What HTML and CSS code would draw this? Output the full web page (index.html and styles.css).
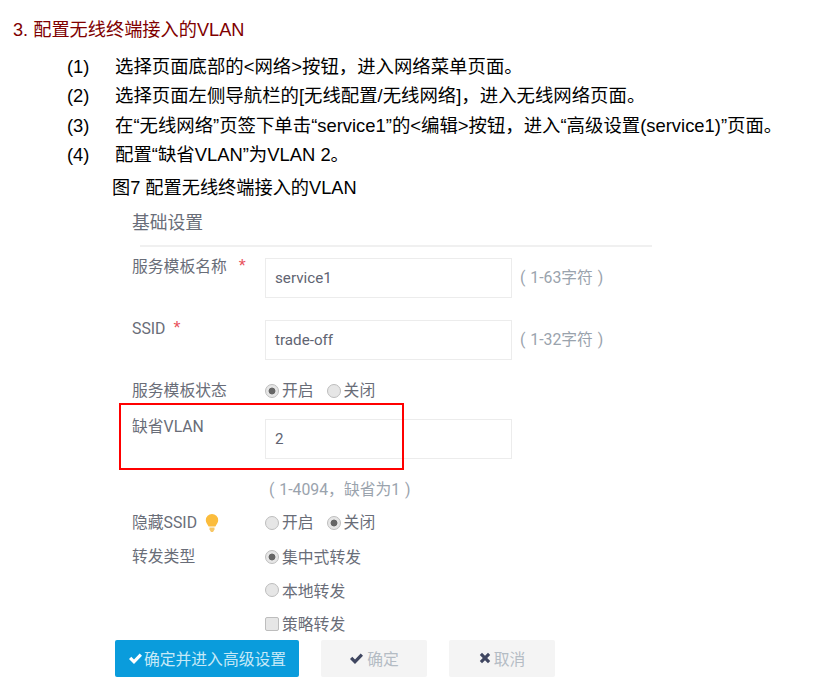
FILE: index.html
```html
<!DOCTYPE html>
<html lang="zh-CN">
<head>
<meta charset="utf-8">
<title>配置无线终端接入的VLAN</title>
<link rel="stylesheet" href="styles.css">
</head>
<body>
<h3 class="heading">3. 配置无线终端接入的VLAN</h3>
<ol class="steps">
  <li class="step"><span class="step-num">(1)</span><span>选择页面底部的&lt;网络&gt;按钮，进入网络菜单页面。</span></li>
  <li class="step"><span class="step-num">(2)</span><span>选择页面左侧导航栏的[无线配置/无线网络]，进入无线网络页面。</span></li>
  <li class="step"><span class="step-num">(3)</span><span>在“无线网络”页签下单击“service1”的&lt;编辑&gt;按钮，进入“高级设置(service1)”页面。</span></li>
  <li class="step"><span class="step-num">(4)</span><span>配置“缺省VLAN”为VLAN 2。</span></li>
</ol>
<p class="caption">图7 配置无线终端接入的VLAN</p>

<section class="shot">
  <h4 class="shot-title">基础设置</h4>
  <div class="divider"></div>

  <div class="row row-input row-name">
    <div class="label">服务模板名称<span class="star star-name">*</span></div>
    <div class="input">service1</div>
    <div class="hint">( 1-63字符 )</div>
  </div>
  <div class="row row-input row-ssid">
    <div class="label">SSID<span class="star star-ssid">*</span></div>
    <div class="input">trade-off</div>
    <div class="hint">( 1-32字符 )</div>
  </div>
  <div class="row row-status">
    <div class="label">服务模板状态</div>
    <div class="choices">
      <span class="choice"><i class="radio on"></i>开启</span>
      <span class="choice"><i class="radio"></i>关闭</span>
    </div>
  </div>
  <div class="row row-input row-vlan">
    <div class="label">缺省VLAN</div>
    <div class="input">2</div>
    <div class="redbox"></div>
  </div>
  <div class="hint hint-vlan">( 1-4094，缺省为1 )</div>
  <div class="row row-hide">
    <div class="label">隐藏SSID
      <svg class="bulb" width="14" height="20" viewBox="0 0 14 20"><path d="M7 1a6.200 6.200 0 0 0-6.200 6.200c0 2.600 1.800 3.900 2.800 6.300h6.800c1-2.400 2.800-3.700 2.800-6.300A6.200 6.200 0 0 0 7 1z" fill="#fbbc3c"/><path d="M4.500 14.500h5v2l-1.500 2.500h-2l-1.500-2.500z" fill="#f7c766"/></svg>
    </div>
    <div class="choices">
      <span class="choice"><i class="radio"></i>开启</span>
      <span class="choice"><i class="radio on"></i>关闭</span>
    </div>
  </div>
  <div class="row row-forward">
    <div class="label">转发类型</div>
    <div class="stack">
      <span class="choice"><i class="radio on"></i>集中式转发</span>
      <span class="choice"><i class="radio"></i>本地转发</span>
      <span class="choice"><i class="check"></i>策略转发</span>
    </div>
  </div>
  <div class="buttons">
    <div class="btn btn-primary"><svg class="ico" width="15" height="13" viewBox="0 0 15 13"><path d="M1 7l2.300-2.300 2.700 2.700L11.700 1.500 14 3.800 6 12z" fill="#fff"/></svg>确定并进入高级设置</div>
    <div class="btn btn-muted"><svg class="ico ico-gap" width="15" height="13" viewBox="0 0 15 13"><path d="M1 7l2.300-2.300 2.700 2.700L11.700 1.500 14 3.800 6 12z" fill="#3f4660"/></svg>确定</div>
    <div class="btn btn-muted"><svg class="ico ico-gap" width="12" height="12" viewBox="0 0 12 12"><path d="M3 .8L6 3.800 9 .8 11.200 3 8.200 6l3 3L9 11.200l-3-3-3 3L.8 9l3-3-3-3z" fill="#3f4660"/></svg>取消</div>
  </div>
</section>
</body>
</html>
```
FILE: styles.css
```css
html, body {
  margin: 0;
  padding: 0;
  background: #fff;
}
body {
  font-family: "Liberation Sans", "Noto Sans CJK SC", sans-serif;
  font-size: 18.2px;
  color: #000;
  height: 699px;
  overflow: hidden;
}
.heading {
  margin: 0;
  padding: 19px 0 0 13px;
  font-size: 18.2px;
  line-height: 22px;
  font-weight: normal;
  color: #800000;
}
.steps {
  list-style: none;
  margin: 0;
  padding: 11px 0 0 67px;
  font-size: 18.4px;
}
.step {
  display: flex;
  height: 29.4px;
  line-height: 29.4px;
}
.step-num {
  width: 48px;
}
.caption {
  margin: 0;
  padding: 4px 0 0 112px;
  line-height: 29px;
}
.shot {
  padding-left: 115px;
  font-family: "Roboto", "Noto Sans CJK SC", sans-serif;
  font-size: 15.8px;
  color: #696d78;
}
.shot-title {
  margin: 0;
  padding: 7px 0 0 17px;
  font-size: 17.8px;
  line-height: 26px;
  font-weight: normal;
}
.divider {
  margin: 9px 0 0 25px;
  width: 512px;
  height: 2px;
  background: #f0f0f0;
}
.row {
  display: flex;
  position: relative;
}
.label {
  width: 133px;
  margin-left: 17px;
  flex: none;
  line-height: 22px;
}
.row-name { margin-top: 11px; }
.row-ssid { margin-top: 22px; }
.row-status { margin-top: 20px; }
.row-vlan { margin-top: 17px; }
.row-hide { margin-top: 1px; }
.row-forward { margin-top: 12px; }
.row-input .label { margin-top: -3px; }
.input {
  box-sizing: border-box;
  width: 247px;
  height: 40px;
  border: 1px solid #ececec;
  padding-left: 9px;
  line-height: 39px;
  color: #5f6472;
  font-size: 15.2px;
}
.hint {
  margin-left: 8px;
  line-height: 40px;
  color: #9aa3ad;
  word-spacing: 1px;
}
.hint-vlan {
  margin: 9px 0 0 154px;
  line-height: 43px;
  height: 43px;
}
.star {
  color: #e8505b;
  font-family: "Liberation Sans", sans-serif;
  font-size: 18px;
}
.star-name { margin-left: 12px; }
.star-ssid { margin-left: 8px; }
.choices {
  display: flex;
  gap: 13px;
  line-height: 22px;
}
.choice {
  display: flex;
  align-items: center;
  gap: 3px;
  height: 22px;
}
.stack {
  display: flex;
  flex-direction: column;
  gap: 11.5px;
}
.radio, .check {
  display: block;
  box-sizing: border-box;
  width: 14px;
  height: 14px;
  background: #e6e6e6;
  border: 1px solid #bdbdbd;
  flex: none;
}
.radio {
  border-radius: 50%;
}
.radio.on {
  background: radial-gradient(circle, #666 0 3px, #e6e6e6 3.8px);
}
.check {
  border-radius: 2px;
}
.bulb {
  vertical-align: -5px;
  margin-left: 4px;
}
.buttons {
  display: flex;
  gap: 22px;
  margin-top: 5px;
}
.btn {
  box-sizing: border-box;
  height: 37px;
  width: 106px;
  display: flex;
  align-items: center;
  justify-content: center;
  background: #f4f4f4;
  color: #b4bcc4;
  border-radius: 2px;
}
.btn-primary {
  width: 184px;
  background: #0a9cdc;
  color: #c6e9f7;
}
.ico {
  flex: none;
}
.btn-primary .ico {
  margin-right: 1px;
}
.ico-gap {
  margin-right: 3px;
}
.redbox {
  position: absolute;
  left: 4px;
  top: -16px;
  width: 281px;
  height: 63px;
  border: 2px solid #f00;
}
```
